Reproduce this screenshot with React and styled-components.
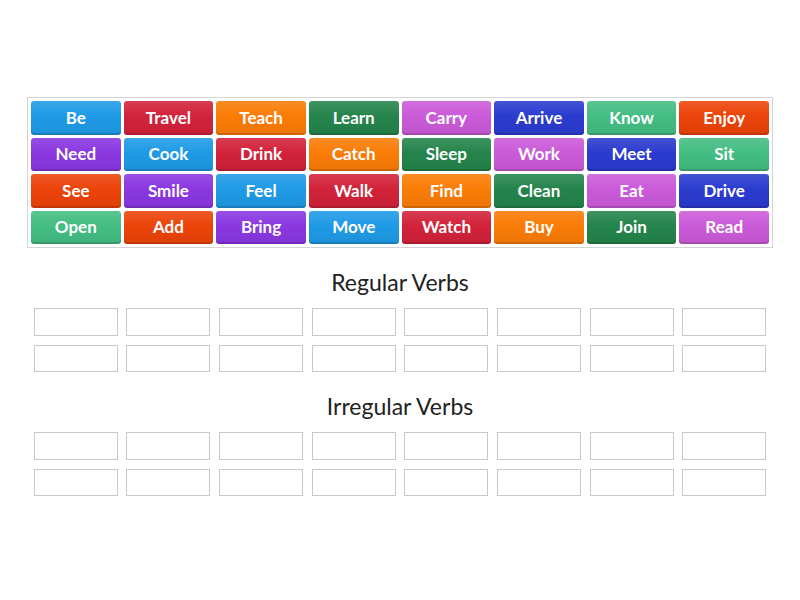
import React from "react";
import styled, { createGlobalStyle } from "styled-components";

const GlobalStyle = createGlobalStyle`
  body {
    margin: 0;
    background: #fff;
    font-family: Lato, "Open Sans", sans-serif;
  }
`;

// colours cycle through the word bank in this order
const COLORS = [
  "#1f9ae6", // blue
  "#d2223a", // red
  "#fa7c06", // orange
  "#24844b", // dark green
  "#cb5ad9", // pink
  "#2b3bcf", // navy
  "#43bd82", // mint
  "#ec4309", // red-orange
  "#8a37e1", // purple
];

const WORDS = [
  "Be", "Travel", "Teach", "Learn", "Carry", "Arrive", "Know", "Enjoy",
  "Need", "Cook", "Drink", "Catch", "Sleep", "Work", "Meet", "Sit",
  "See", "Smile", "Feel", "Walk", "Find", "Clean", "Eat", "Drive",
  "Open", "Add", "Bring", "Move", "Watch", "Buy", "Join", "Read",
];

const GROUPS = ["Regular Verbs", "Irregular Verbs"];

export default function App() {
  return (
    <>
      <GlobalStyle />
      <Page>
        <Bank>
          {WORDS.map((w, i) => (
            <Tile key={w} color={COLORS[i % COLORS.length]}>
              {w}
            </Tile>
          ))}
        </Bank>

        {GROUPS.map((g) => (
          <Group key={g}>
            <GroupTitle>{g}</GroupTitle>
            <Slots>
              {Array.from({ length: 16 }).map((_, i) => (
                <Slot key={i} />
              ))}
            </Slots>
          </Group>
        ))}
      </Page>
    </>
  );
}

const Page = styled.div`
  width: 800px;
  height: 600px;
  padding-top: 97px;
  box-sizing: border-box;
`;

const Bank = styled.div`
  margin: 0 27px;
  border: 1px solid #d4d4d4;
  padding: 3px;
  display: grid;
  grid-template-columns: repeat(8, 1fr);
  grid-auto-rows: 33.5px;
  gap: 3px;
`;

const Tile = styled.div`
  display: flex;
  align-items: center;
  justify-content: center;
  padding-bottom: 1px;
  box-sizing: border-box;
  border-radius: 3px;
  color: #fff;
  font-size: 17px;
  font-weight: 700;
  background: ${(p) => p.color};
  background-image: linear-gradient(
    rgba(255, 255, 255, 0.12),
    rgba(255, 255, 255, 0) 45%,
    rgba(0, 0, 0, 0.06)
  );
  box-shadow: inset 0 -2px 0 rgba(0, 0, 0, 0.14);
`;

const Group = styled.div`
  margin-top: 21px;
  display: flex;
  flex-direction: column;
  align-items: center;
`;

const GroupTitle = styled.div`
  font-size: 23px;
  line-height: 27px;
  color: #222;
  margin-bottom: 12px;
`;

const Slots = styled.div`
  display: grid;
  grid-template-columns: repeat(8, 84px);
  grid-auto-rows: 27.5px;
  column-gap: 8.7px;
  row-gap: 9px;
`;

const Slot = styled.div`
  border: 1px solid #c9c9c9;
  box-sizing: border-box;
`;
